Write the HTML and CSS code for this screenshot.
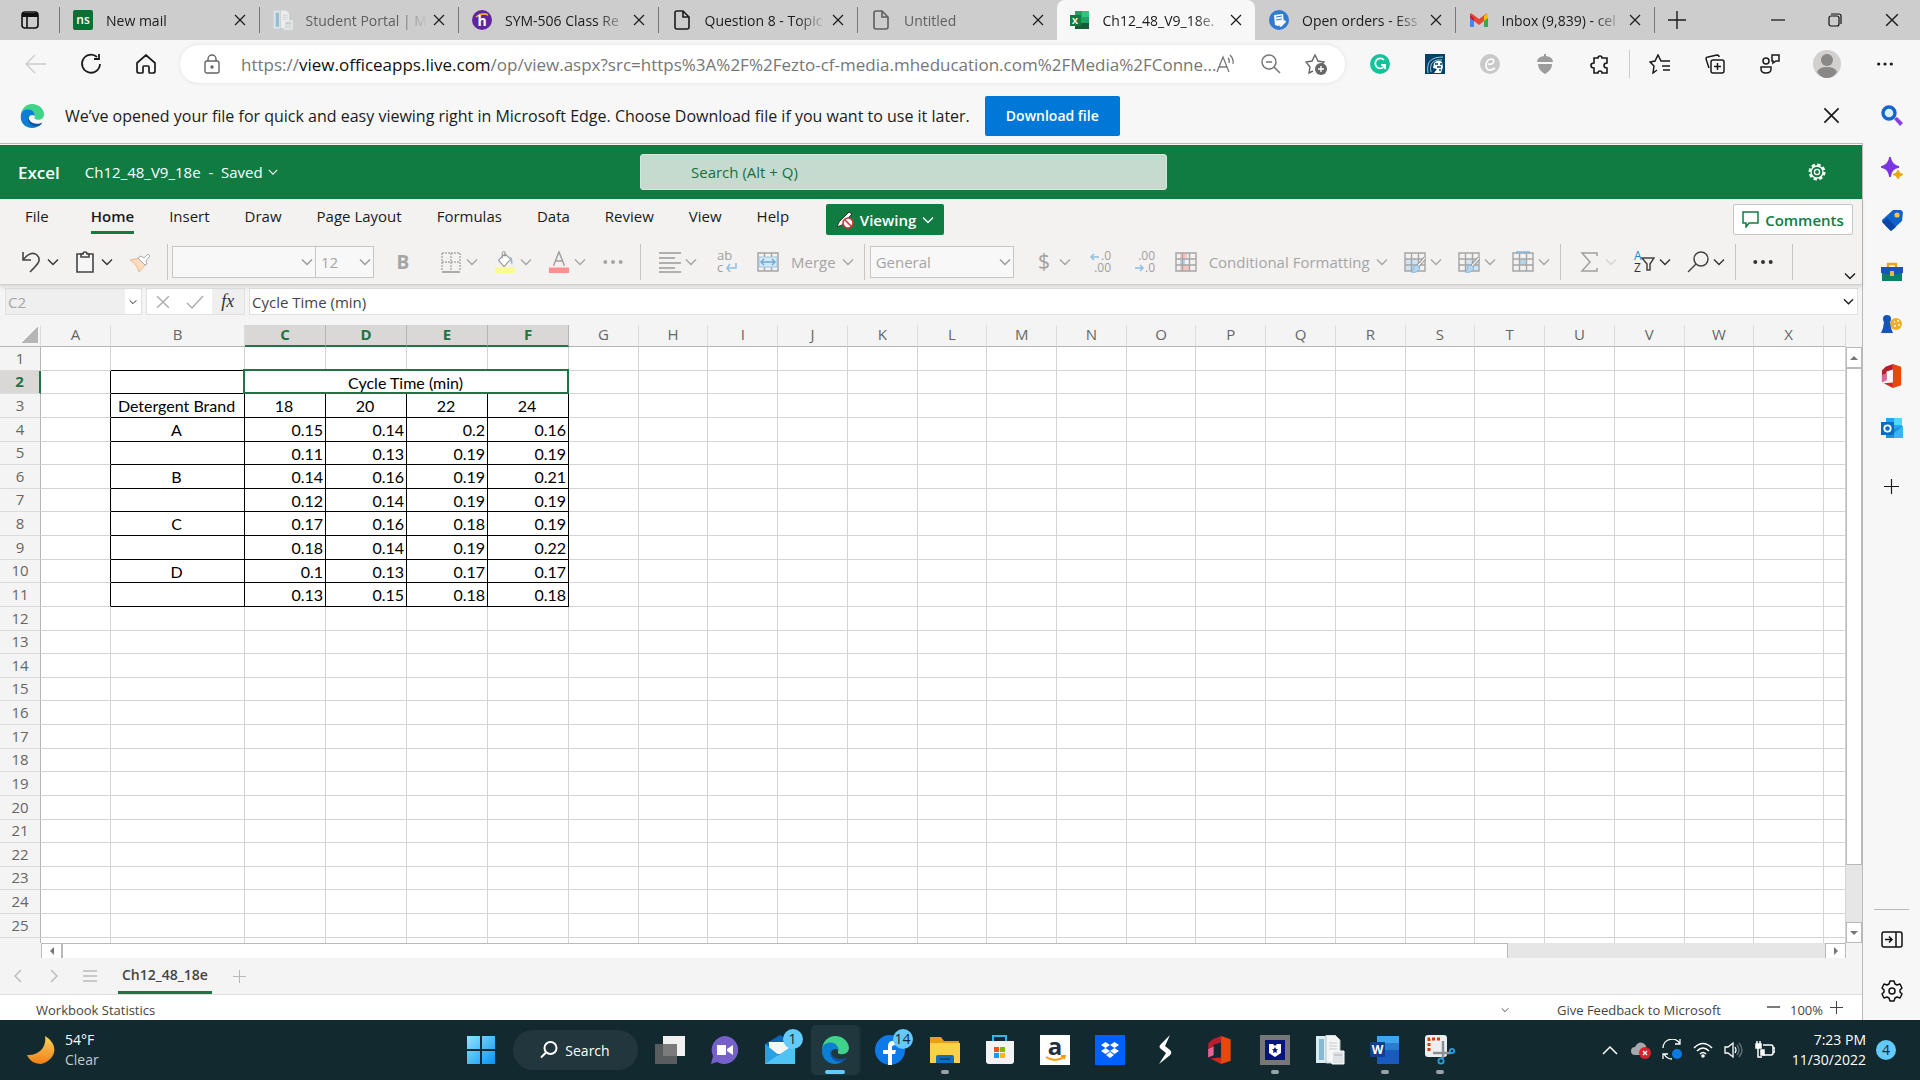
FILE: index.html
```html
<!DOCTYPE html>
<html lang="en">
<head>
    <meta charset="utf-8">
    <title>Ch12_48_V9_18e.xlsx</title>
    <link rel="stylesheet" href="styles.css">
</head>
<body>
    <!-- shared icons -->
    <svg class="icon-defs" aria-hidden="true">
        <symbol id="close" viewBox="0 0 12 12"><path d="M1 1l10 10M11 1L1 11" fill="none" stroke="currentColor" stroke-width="1.2"/></symbol>
        <symbol id="chevron" viewBox="0 0 12 12"><path d="M1 3.5l5 5 5-5" fill="none" stroke="currentColor" stroke-width="1.4"/></symbol>
        <symbol id="plus" viewBox="0 0 18 18"><path d="M9 0v18M0 9h18" fill="none" stroke="currentColor" stroke-width="1.4"/></symbol>
        <symbol id="dots" viewBox="0 0 20 20"><g fill="currentColor"><circle cx="3" cy="10" r="1.8"/><circle cx="10" cy="10" r="1.8"/><circle cx="17" cy="10" r="1.8"/></g></symbol>
        <symbol id="page" viewBox="0 0 20 20"><path d="M3 3q0-2 2-2h6l6 6v10q0 2-2 2H5q-2 0-2-2zM11 1v6h6" fill="none" stroke="currentColor" stroke-width="1.6"/></symbol>
        <symbol id="edge" viewBox="0 0 28 28">
            <path d="M2 14C2 6 8 1 14 1c8 0 13 6 13 11 0 4-3 6-6 6-4 0-5-1-4-3 1-4-3-6-6-6-5 0-9 3-9 5z" fill="#41d38a"/>
            <path d="M2 14c0-5 4-7 8-7 5 0 7 4 7 7-4-3-8 1-6 5 2 5 8 6 13 3-2 3-6 5-10 5C7 27 1 21 2 14z" fill="#0c7fd2"/>
            <path d="M10 14c-2 6 3 11 8 11 3 0 6-1 7-4-5 3-12 1-14-3-1-1-1-3-1-4z" fill="#1053a0"/>
        </symbol>
        <symbol id="office" viewBox="0 0 24 28">
            <path d="M13 1L5 4 1 8v12l5-2V9l7-2z" fill="#b5202c"/><path d="M1 13l5-2v8l-5 2z" fill="#e0669a"/>
            <path d="M13 1l9 3v20l-9 3z" fill="#e8480c"/><path d="M3 22l10-1v6z" fill="#d3281e"/>
        </symbol>
        <symbol id="paper" viewBox="0 0 28 30"><path d="M0 1h14v27H0z" fill="#dcecf3"/><path d="M3 4h5v21H3z" fill="#86b9d4"/><path d="M10 0h9l5 5v23H10z" fill="#f3f4f4" stroke="#b9c2c6"/><path d="M13 8h8M13 11h8M13 14h8" stroke="#c4ccd0"/><path d="M16 16h12v13H16z" fill="#dfe3e5" stroke="#fff"/><path d="M18 20h8" stroke="#aab3b8"/></symbol>
        <symbol id="grid" viewBox="0 0 22 22"><path d="M1 2h20v18H1zM1 8h20M1 14h20M7.5 2v18M14.5 2v18" fill="none" stroke="#a5a5a5" stroke-width="1.4"/></symbol>
        <symbol id="brush" viewBox="0 0 22 22"><path d="M21 7l-8 9" stroke="#999" stroke-width="3.4" fill="none"/><path d="M21 7l-8 9" stroke="#f3f2f1" stroke-width="1.4" fill="none"/><path d="M13 14l3 3c-2 4-5 5-9 4 2-1 2-2 2-3 0-3 2-4 4-4z" fill="#b4d6ec" stroke="#83b7dc"/></symbol>
    </svg>

    <header class="tab-strip">
        <button class="strip-menu" aria-label="Tab actions"><svg width="20" height="20" viewBox="0 0 20 20"><rect x="2" y="2" width="16" height="16" rx="3" fill="none" stroke="#111" stroke-width="1.6"/><path d="M2 3h16v4H2z" fill="#111"/><path d="M7 6v12" stroke="#111" stroke-width="1.6"/></svg></button>
        <div class="tabs">
            <div class="tab">
                <svg class="favicon" viewBox="0 0 20 20"><rect width="20" height="20" rx="2" fill="#0b7034"/><text x="10" y="14" text-anchor="middle" font-size="12" font-weight="600" fill="#fff">ns</text></svg>
                <a href="#">New mail</a><button aria-label="Close tab"><svg><use href="#close"/></svg></button>
            </div>
            <div class="tab asleep">
                <svg class="favicon"><use href="#paper"/></svg>
                <a href="#">Student Portal | M</a><button aria-label="Close tab"><svg><use href="#close"/></svg></button>
            </div>
            <div class="tab">
                <svg class="favicon" viewBox="0 0 20 20"><circle cx="10" cy="10" r="10" fill="#5f259f"/><path d="M4 7q6-5 12-2" stroke="#f2b233" stroke-width="1.5" fill="none"/><text x="10" y="16" text-anchor="middle" font-size="14" font-weight="700" fill="#fff">h</text></svg>
                <a href="#">SYM-506 Class Re</a><button aria-label="Close tab"><svg><use href="#close"/></svg></button>
            </div>
            <div class="tab">
                <svg class="favicon"><use href="#page"/></svg>
                <a href="#">Question 8 - Topic</a><button aria-label="Close tab"><svg><use href="#close"/></svg></button>
            </div>
            <div class="tab asleep">
                <svg class="favicon"><use href="#page"/></svg>
                <a href="#">Untitled</a><button aria-label="Close tab"><svg><use href="#close"/></svg></button>
            </div>
            <div class="tab current">
                <svg class="favicon" viewBox="0 0 20 20"><path d="M5 1h14v18H5z" fill="#21a366"/><path d="M12 1h7v6h-7z" fill="#33c481"/><path d="M5 13h14v6H5z" fill="#185c37"/><path d="M0 5h11v11H0z" fill="#107c41"/><text x="5" y="14" text-anchor="middle" font-size="9" font-weight="700" fill="#fff">X</text></svg>
                <a href="#">Ch12_48_V9_18e.</a><button aria-label="Close tab"><svg><use href="#close"/></svg></button>
            </div>
            <div class="tab">
                <svg class="favicon" viewBox="0 0 20 20"><circle cx="10" cy="10" r="10" fill="#2f7bd3"/><path d="M5 5l9-1 1 9-6 3-3-1z" fill="#fff"/><path d="M7 7l6-1M7 10l6-1" stroke="#2f7bd3"/><path d="M10 16l6-6 1 2-5 5z" fill="#fff"/></svg>
                <a href="#">Open orders - Ess</a><button aria-label="Close tab"><svg><use href="#close"/></svg></button>
            </div>
            <div class="tab">
                <svg class="favicon" viewBox="0 0 20 20"><path d="M1 5v12h4V8z" fill="#4285f4"/><path d="M15 8v9h4V5z" fill="#34a853"/><path d="M1 4l4 3v4L1 8z" fill="#c5221f"/><path d="M2 3l8 6 8-6-3 6v2l-5 4-5-4V8L1 5z" fill="#ea4335"/><path d="M15 6q4-4 4-1v3l-4 3z" fill="#fbbc04"/></svg>
                <a href="#">Inbox (9,839) - cel</a><button aria-label="Close tab"><svg><use href="#close"/></svg></button>
            </div>
        </div>
        <div class="window-buttons">
            <button aria-label="New tab"><svg width="18" height="18"><use href="#plus"/></svg></button>
            <span class="spacer"></span>
            <button aria-label="Minimize"><svg width="14" height="14"><path d="M0 7h14" stroke="#111" stroke-width="1.2"/></svg></button>
            <button aria-label="Restore"><svg width="14" height="14" viewBox="0 0 14 14" fill="none" stroke="#111" stroke-width="1.2"><rect x="1" y="3" width="10" height="10" rx="2"/><path d="M3 1h8q2 0 2 2v8"/></svg></button>
            <button aria-label="Close"><svg width="14" height="14"><use href="#close"/></svg></button>
        </div>
    </header>

    <div class="nav-bar">
        <button class="nav-button dim" aria-label="Back"><svg width="22" height="20" viewBox="0 0 22 20" fill="none" stroke="currentColor" stroke-width="1.4"><path d="M10 1L1 10l9 9M1 10h20"/></svg></button>
        <button class="nav-button" aria-label="Refresh"><svg width="22" height="22" viewBox="0 0 22 22" fill="none" stroke="currentColor" stroke-width="1.8"><path d="M20 11a9 9 0 1 1-3-7M19 1v5h-5"/></svg></button>
        <button class="nav-button" aria-label="Home"><svg width="20" height="20" viewBox="0 0 20 20" fill="none" stroke="currentColor" stroke-width="1.7"><path d="M1 9l9-8 9 8v8q0 2-2 2h-3q-1 0-1-1v-5q0-1-1-1H8q-1 0-1 1v5q0 1-1 1H3q-2 0-2-2z"/></svg></button>
        <div class="address">
            <svg width="16" height="20" viewBox="0 0 16 20" fill="none" stroke="#666" stroke-width="1.4"><rect x="1" y="7" width="14" height="12" rx="2"/><path d="M4 7V5a4 4 0 0 1 8 0v2"/><circle cx="8" cy="13" r="1" fill="#666"/></svg>
            <span class="url">https://<b>view.officeapps.live.com</b>/op/view.aspx?src=https%3A%2F%2Fezto-cf-media.mheducation.com%2FMedia%2FConne...</span>
            <button aria-label="Read aloud"><svg width="20" height="20" viewBox="0 0 20 20" fill="none" stroke="#777" stroke-width="1.3"><path d="M1 18L7 3l6 15M3 13h8M12 4q2 2 1 5M14 1q4 4 3 9"/></svg></button>
            <button aria-label="Zoom out"><svg width="20" height="20" viewBox="0 0 20 20" fill="none" stroke="#777" stroke-width="1.5"><circle cx="8" cy="8" r="7"/><path d="M13 13l6 6M5 8h6"/></svg></button>
            <button aria-label="Add to favorites"><svg width="22" height="22" viewBox="0 0 22 22" fill="none" stroke="#666" stroke-width="1.4"><path d="M8 18l-4 2 1-6-4-5 6-1 3-6 3 6 6 1-3 3"/><circle cx="16" cy="16" r="6" fill="#666" stroke="none"/><path d="M16 13v6M13 16h6" stroke="#fff"/></svg></button>
        </div>
        <button class="nav-button" aria-label="Grammarly"><svg width="20" height="20" viewBox="0 0 20 20"><circle cx="10" cy="10" r="10" fill="#15c39a"/><path d="M14 6a5 5 0 1 0 1 5h-4M15 11v4" fill="none" stroke="#fff" stroke-width="1.8"/></svg></button>
        <button class="nav-button" aria-label="Alaska extension"><svg width="20" height="20" viewBox="0 0 20 20"><path d="M0 0h20v20H0z" fill="#01426a"/><path d="M3 19C1 7 7 3 18 3M6 18C4 9 9 5 17 6" fill="none" stroke="#9bc9d8"/><path d="M9 9q4-4 8-1l1 5-2 6h-7l3-4-4-1z" fill="#fff"/><path d="M10 10h3M15 10h2M12 13h4M14 16h2" stroke="#01426a" stroke-width="1.4"/></svg></button>
        <button class="nav-button" aria-label="Capital One Shopping"><svg width="20" height="20" viewBox="0 0 20 20"><circle cx="10" cy="10" r="10" fill="#c9c9c9"/><path d="M15 14q-8 5-9-2 0-7 6-7 3 1 1 4-2 2-5 1" fill="none" stroke="#fff" stroke-width="1.6"/></svg></button>
        <button class="nav-button" aria-label="Acorns"><svg width="18" height="20" viewBox="0 0 18 20" fill="#9c9c9c"><path d="M1 8q0-5 7-6V0h2v2q7 1 7 6zM2 10h14q0 6-7 10-7-4-7-10z"/></svg></button>
        <button class="nav-button" aria-label="Extensions"><svg width="20" height="20" viewBox="0 0 20 20" fill="none" stroke="currentColor" stroke-width="1.6"><path d="M4 3h4q0-2 2-2t2 2h5v5q-3 0-3 2.500t3 2.500v5h-5q0-2-2-2t-2 2H4v-5q-3 0-3-2.500T4 8z" transform="translate(0 1)"/></svg></button>
        <span class="nav-divider"></span>
        <button class="nav-button" aria-label="Favorites"><svg width="22" height="20" viewBox="0 0 22 20" fill="none" stroke="currentColor" stroke-width="1.5"><path d="M8 16l-4 3 1-7-4-4 5-1 3-6 3 6h9M13 12h8M14 16h7"/></svg></button>
        <button class="nav-button" aria-label="Collections"><svg width="20" height="20" viewBox="0 0 20 20" fill="none" stroke="currentColor" stroke-width="1.5"><rect x="6" y="6" width="13" height="13" rx="2"/><path d="M12.500 9v7M9 12.500h7M4 14L1 5q0-2 2-2l9-2q2 0 2 2"/></svg></button>
        <button class="nav-button" aria-label="Share"><svg width="20" height="20" viewBox="0 0 20 20" fill="none" stroke="currentColor" stroke-width="1.5"><circle cx="6" cy="7" r="3"/><path d="M1 13h10v2q0 4-5 4t-5-4zM12 1h7v6h-3l-3 2V7h-1z"/></svg></button>
        <button class="nav-button profile" aria-label="Profile"><svg width="28" height="28" viewBox="0 0 28 28"><circle cx="14" cy="14" r="14" fill="#d2d0ce"/><circle cx="14" cy="10" r="6" fill="#8a8886"/><path d="M4 22q2-5 10-5t10 5q-4 6-10 6T4 22z" fill="#8a8886"/></svg></button>
        <button class="nav-button" aria-label="Settings and more"><svg width="18" height="18"><use href="#dots"/></svg></button>
    </div>

    <div class="content">
        <main>
            <div class="notice">
                <svg width="26" height="26"><use href="#edge"/></svg>
                <span>We’ve opened your file for quick and easy viewing right in Microsoft Edge. Choose Download file if you want to use it later.</span>
                <button class="download">Download file</button>
                <button class="dismiss" aria-label="Close"><svg width="17" height="17"><use href="#close"/></svg></button>
            </div>

            <div class="app">
                <div class="title-bar">
                    <div class="file-title"><strong>Excel</strong><span>Ch12_48_V9_18e&nbsp; - &nbsp;Saved</span><svg width="10" height="10"><use href="#chevron"/></svg></div>
                    <input type="search" placeholder="Search (Alt + Q)" aria-label="Search">
                    <button aria-label="Settings"><svg width="20" height="20" viewBox="0 0 20 20" fill="none" stroke="#fff"><circle cx="10" cy="10" r="7.300" stroke-width="2.400" stroke-dasharray="3.400 2.330"/><circle cx="10" cy="10" r="6" stroke-width="1.300"/><circle cx="10" cy="10" r="2.600" stroke-width="1.300"/></svg></button>
                </div>

                <div class="ribbon">
                    <nav class="ribbon-tabs">
                        <a href="#" class="file">File</a>
                        <a href="#" class="selected">Home</a>
                        <a href="#">Insert</a>
                        <a href="#">Draw</a>
                        <a href="#">Page Layout</a>
                        <a href="#">Formulas</a>
                        <a href="#">Data</a>
                        <a href="#">Review</a>
                        <a href="#">View</a>
                        <a href="#">Help</a>
                        <button class="viewing"><svg width="18" height="18" viewBox="0 0 18 18"><path d="M1 16l2-5L13 1l3 2L6 14z" fill="#fff" stroke="#333"/><circle cx="12" cy="12" r="5" fill="#fff" stroke="#d13438" stroke-width="1.6"/><path d="M8.500 8.500l7 7" stroke="#d13438" stroke-width="1.6"/></svg>Viewing<svg width="12" height="12"><use href="#chevron"/></svg></button>
                        <button class="comments"><svg width="17" height="17" viewBox="0 0 17 17" fill="none" stroke="#107c41" stroke-width="1.5"><path d="M1 1h15v11H7l-3 4v-4H1z"/></svg>Comments</button>
                    </nav>
                    <div class="tools">
                        <div class="group first">
                            <button class="tool on" aria-label="Undo"><svg viewBox="0 0 22 22"><path d="M2 1v8h8M2 9Q10-1 16 4c5 5 1 9-7 17" fill="none" stroke="#444" stroke-width="1.6"/></svg><svg class="arrow"><use href="#chevron"/></svg></button>
                            <button class="tool on" aria-label="Paste"><svg viewBox="0 0 22 22" fill="#f6f6f6" stroke="#444" stroke-width="1.6"><path d="M2 3h16v18H2z"/><path d="M6 6V3h2q0-2 2-2t2 2h2v3z"/></svg><svg class="arrow"><use href="#chevron"/></svg></button>
                            <button class="tool" aria-label="Format painter"><svg viewBox="0 0 22 22"><path d="M1 9l10-2 7 5-8 9q-2-8-9-12z" fill="#fbdcc0" stroke="#ecb98f"/><path d="M9 7l3-2 3 2 4-4 2 2-4 5 1 3-2 1z" fill="#fff" stroke="#a9a9a9"/></svg></button>
                        </div>
                        <div class="group fonts">
                            <div class="picker font-name"><select aria-label="Font"><option></option></select><svg class="arrow"><use href="#chevron"/></svg></div>
                            <div class="picker font-size"><select aria-label="Font size"><option>12</option></select><svg class="arrow"><use href="#chevron"/></svg></div>
                            <button class="tool bold" aria-label="Bold">B</button>
                            <button class="tool" aria-label="Borders"><svg viewBox="0 0 22 22" fill="none" stroke="#aaa" stroke-width="1.4"><path d="M2 2h18v18M2 2v18M11 2v18M2 11h18" stroke-dasharray="2 1"/><path d="M2 21h18" stroke-width="2"/></svg><svg class="arrow"><use href="#chevron"/></svg></button>
                            <button class="tool" aria-label="Fill color"><svg viewBox="0 0 22 24"><path d="M4 10l7-7 6 6-7 8zM8 8V3q0-3 3-2v5" fill="#fff" stroke="#999" stroke-width="1.2"/><path d="M16 6q4 1 3 9-2-1-2-7z" fill="#86b7dc"/><path d="M0 18h22v6H0z" fill="#fafa90"/></svg><svg class="arrow"><use href="#chevron"/></svg></button>
                            <button class="tool" aria-label="Font color"><svg viewBox="0 0 22 24"><path d="M5 16L11 1l6 15M7 11h8" fill="none" stroke="#a0a0a0" stroke-width="1.6"/><path d="M0 18h22v6H0z" fill="#fb9090"/></svg><svg class="arrow"><use href="#chevron"/></svg></button>
                            <button class="tool" aria-label="More font options"><svg><use href="#dots"/></svg></button>
                        </div>
                        <div class="group">
                            <button class="tool" aria-label="Align"><svg viewBox="0 0 22 22" fill="none" stroke="#999" stroke-width="1.5"><path d="M0 2h22M0 7h16M0 12h22M0 17h16M0 21h22"/></svg><svg class="arrow"><use href="#chevron"/></svg></button>
                            <button class="tool wide" aria-label="Wrap text"><svg viewBox="0 0 22 22"><text x="1" y="9" font-size="13" fill="#a0a0a0">ab</text><text x="1" y="21" font-size="13" fill="#a0a0a0">c</text><path d="M20 12v5h-9M14 13l-3 4 3 4" fill="none" stroke="#8fbfe3" stroke-width="1.5"/></svg></button>
                            <button class="tool"><svg viewBox="0 0 22 22"><path d="M1 2h20v18H1zM7.500 2v18M14.500 2v18" fill="none" stroke="#a5a5a5" stroke-width="1.5"/><path d="M2 6h18v10H2z" fill="#d3e7f4" stroke="#9cc5e2"/><path d="M4 11h14M7 8l-3 3 3 3M15 8l3 3-3 3" fill="none" stroke="#6ea8d4" stroke-width="1.4"/></svg><span>Merge</span><svg class="arrow"><use href="#chevron"/></svg></button>
                        </div>
                        <div class="group formats">
                            <div class="picker number-format"><select aria-label="Number format"><option>General</option></select><svg class="arrow"><use href="#chevron"/></svg></div>
                            <button class="tool" aria-label="Currency"><svg viewBox="0 0 22 22"><text x="11" y="18" text-anchor="middle" font-size="21" fill="#a0a0a0">$</text></svg><svg class="arrow"><use href="#chevron"/></svg></button>
                            <button class="tool wide" aria-label="Increase decimal"><svg viewBox="0 0 22 22"><text x="21" y="9" text-anchor="end" font-size="12" fill="#a0a0a0">.0</text><text x="21" y="21" text-anchor="end" font-size="12" fill="#a0a0a0">.00</text><path d="M9 6H1M4 3L1 6l3 3" fill="none" stroke="#8fbfe3" stroke-width="1.5"/></svg></button>
                            <button class="tool wide" aria-label="Decrease decimal"><svg viewBox="0 0 22 22"><text x="21" y="9" text-anchor="end" font-size="12" fill="#a0a0a0">.00</text><text x="21" y="21" text-anchor="end" font-size="12" fill="#a0a0a0">.0</text><path d="M1 17h8M6 14l3 3-3 3" fill="none" stroke="#8fbfe3" stroke-width="1.5"/></svg></button>
                            <button class="tool"><svg viewBox="0 0 22 22"><path d="M5 2h7v6H5zM5 14h9v6H5z" fill="#f8c4c4"/><path d="M5 8h5v6H5z" fill="#b4d6ec"/><use href="#grid"/></svg><span>Conditional Formatting</span><svg class="arrow"><use href="#chevron"/></svg></button>
                            <button class="tool" aria-label="Format as table"><svg viewBox="0 0 22 22"><path d="M1 8h14v12H1z" fill="#cfe4f2"/><use href="#grid"/><use href="#brush"/></svg><svg class="arrow"><use href="#chevron"/></svg></button>
                            <button class="tool" aria-label="Cell styles"><svg viewBox="0 0 22 22"><path d="M8 8h13v12H8z" fill="#cfe4f2"/><use href="#grid"/><use href="#brush"/></svg><svg class="arrow"><use href="#chevron"/></svg></button>
                            <button class="tool" aria-label="Insert cells"><svg viewBox="0 0 22 22"><path d="M8 8h6v6H8z" fill="#b4d6ec"/><use href="#grid"/><path d="M5 0v3M17 0v3M5 1h12" stroke="#83b7dc" stroke-width="1.3"/></svg><svg class="arrow"><use href="#chevron"/></svg></button>
                        </div>
                        <div class="group">
                            <button class="tool faint" aria-label="AutoSum"><svg viewBox="0 0 22 22"><path d="M18 5V2H3l8 9-8 9h15v-3" fill="none" stroke="#a0a0a0" stroke-width="1.5"/></svg><svg class="arrow"><use href="#chevron"/></svg></button>
                            <button class="tool on" aria-label="Sort and filter"><svg viewBox="0 0 22 22"><text x="1" y="9" font-size="12" fill="#1f86cf">A</text><text x="1" y="21" font-size="12" fill="#333">Z</text><path d="M9 7h12l-4 6v6h-3v-6z" fill="none" stroke="#444" stroke-width="1.5"/></svg><svg class="arrow"><use href="#chevron"/></svg></button>
                            <button class="tool on" aria-label="Find"><svg viewBox="0 0 22 22" fill="none" stroke="#444" stroke-width="1.5"><circle cx="14" cy="8" r="7"/><path d="M9 13l-8 8"/></svg><svg class="arrow"><use href="#chevron"/></svg></button>
                        </div>
                        <div class="group last"><button class="tool on" aria-label="More commands"><svg><use href="#dots"/></svg></button></div>
                        <button class="collapse" aria-label="Collapse ribbon"><svg width="12" height="12"><use href="#chevron"/></svg></button>
                    </div>
                </div>

                <div class="formula-bar">
                    <div class="name-box"><input type="text" value="C2" aria-label="Name box"><button aria-label="Names"><svg width="8" height="8"><use href="#chevron"/></svg></button></div>
                    <div class="formula-buttons">
                        <button aria-label="Cancel"><svg width="14" height="14"><use href="#close"/></svg></button>
                        <button aria-label="Enter"><svg width="18" height="14" viewBox="0 0 18 14"><path d="M1 8l5 5L17 1" fill="none" stroke="currentColor" stroke-width="1.4"/></svg></button>
                        <button class="fx" aria-label="Insert function">fx</button>
                    </div>
                    <div class="formula"><input type="text" value="Cycle Time (min)" aria-label="Formula"><button aria-label="Expand formula bar"><svg width="11" height="11"><use href="#chevron"/></svg></button></div>
                </div>

                <div class="sheet-area">
                    <div class="sheet-view">
                        <table class="sheet">
                            <colgroup id="columns"></colgroup>
                            <thead id="columnNames"></thead>
                            <tbody id="rows"></tbody>
                        </table>
                    </div>
                    <div class="v-scroll"><button aria-label="Scroll up"><i class="up"></i></button><div class="thumb"></div><button aria-label="Scroll down"><i class="down"></i></button></div>
                </div>
                <div class="h-scroll"><button aria-label="Scroll left"><i class="left"></i></button><div class="thumb"></div><div class="track"></div><button aria-label="Scroll right"><i class="right"></i></button></div>

                <div class="sheet-tabs">
                    <button aria-label="Previous sheet"><svg width="8" height="14" viewBox="0 0 8 14"><path d="M7 1L1 7l6 6" fill="none" stroke="currentColor" stroke-width="1.4"/></svg></button>
                    <button aria-label="Next sheet"><svg width="8" height="14" viewBox="0 0 8 14"><path d="M1 1l6 6-6 6" fill="none" stroke="currentColor" stroke-width="1.4"/></svg></button>
                    <button aria-label="All sheets"><svg width="14" height="12" viewBox="0 0 14 12"><path d="M0 1h14M0 6h14M0 11h14" stroke="currentColor" stroke-width="1.4"/></svg></button>
                    <a href="#">Ch12_48_18e</a>
                    <button aria-label="New sheet"><svg width="13" height="13"><use href="#plus"/></svg></button>
                </div>

                <footer class="status-bar">
                    <span>Workbook Statistics</span>
                    <svg class="status-arrow" width="8" height="8"><use href="#chevron"/></svg>
                    <a href="#">Give Feedback to Microsoft</a>
                    <button aria-label="Zoom out"><svg width="13" height="13"><path d="M0 6h13" stroke="#444" stroke-width="1.4"/></svg></button>
                    <span>100%</span>
                    <button aria-label="Zoom in"><svg width="13" height="13"><use href="#plus"/></svg></button>
                </footer>
            </div>
        </main>

        <aside class="sidebar">
            <button aria-label="Search"><svg viewBox="0 0 22 22"><path d="M13 14l3-2 6 6-3 3z" fill="#8a3ee0"/><circle cx="8" cy="8" r="6" fill="#d9f1fb" stroke="#1565d0" stroke-width="3.400"/></svg></button>
            <button aria-label="Discover"><svg viewBox="0 0 22 22"><path d="M9 0q1 8 9 10-8 1-9 10-1-9-9-10 8-2 9-10z" fill="#7a35e0" stroke="#7a35e0" stroke-width="1.5"/><path d="M17 13q1 4 5 4.500-4 1-5 4.500-1-4-5-4.500 4-.5 5-4.500z" fill="#eaa513" stroke="#eaa513"/></svg></button>
            <button aria-label="Shopping"><svg viewBox="0 0 22 22"><path d="M1 11L12 1l8 0 2 2-1 9-11 10Q6 19 1 12z" fill="#0f62c9"/><path d="M1 13l5-4 9 9-5 4z" fill="#0b45a8"/><circle cx="16" cy="6" r="2.600" fill="#f5c33b"/></svg></button>
            <button aria-label="Tools"><svg viewBox="0 0 22 22"><path d="M7 6V3h8v3" fill="none" stroke="#e9a51c" stroke-width="2.400"/><path d="M1 12h20v8H1z" fill="#0a8064"/><path d="M0 6h22v6l-11 2L0 12z" fill="#1257c0"/><path d="M9 10h4v5H9z" fill="#f2b92c"/></svg></button>
            <button aria-label="Games"><svg viewBox="0 0 22 22"><circle cx="15" cy="11" r="6" fill="#f0ae24"/><path d="M13 9h1M16 8h2M13 13h2M17 12h2" stroke="#fff" stroke-width="1.6"/><circle cx="6" cy="6" r="4" fill="#1554b8"/><path d="M3 9h6l1 6 2 5H0l2-5z" fill="#1554b8"/></svg></button>
            <button aria-label="Office"><svg class="tall"><use href="#office"/></svg></button>
            <button aria-label="Outlook"><svg viewBox="0 0 22 22"><path d="M5 1h16v13H5z" fill="#28a8ea"/><path d="M13 1h8v7h-8z" fill="#50d9ff"/><path d="M5 14l17-5v12H5z" fill="#1a90e0"/><path d="M13 16l9-7v12h-9z" fill="#35b8f1"/><path d="M0 5h13v13H0z" fill="#0a6cc0"/><circle cx="6.500" cy="11.500" r="3.200" fill="none" stroke="#fff" stroke-width="1.8"/></svg></button>
            <button class="add" aria-label="Add app"><svg class="small"><use href="#plus"/></svg></button>
            <hr>
            <button aria-label="Hide sidebar"><svg viewBox="0 0 22 22" fill="none" stroke="#111" stroke-width="1.5"><rect x="1" y="4" width="20" height="15" rx="2"/><path d="M15 4v15M4 11.500h7M8 8.500l3 3-3 3"/></svg></button>
            <button aria-label="Sidebar settings"><svg viewBox="0 0 22 22" fill="none" stroke="#111" stroke-width="1.5"><path d="M9 1h4l1 3 2 1 3-1 2 4-2 2v2l2 2-2 4-3-1-2 1-1 3H9l-1-3-2-1-3 1-2-4 2-2v-2L1 8l2-4 3 1 2-1z" stroke-linejoin="round"/><circle cx="11" cy="11" r="3"/></svg></button>
        </aside>
    </div>

    <div class="taskbar">
        <button class="weather"><svg width="28" height="30" viewBox="0 0 28 30"><defs><linearGradient id="moon" x2="0" y2="1"><stop stop-color="#fbd35a"/><stop offset="1" stop-color="#f07f16"/></linearGradient></defs><path d="M18 1c14 8 12 24-4 28C7 29 2 25 0 20c12 1 20-8 18-19z" fill="url(#moon)"/></svg><span>54°F<small>Clear</small></span></button>
        <div class="apps">
            <button aria-label="Start"><svg viewBox="0 0 30 30"><defs><linearGradient id="win" x2="1" y2="1"><stop stop-color="#8ce6ff"/><stop offset="1" stop-color="#0a93f5"/></linearGradient></defs><path d="M1 1h13v13H1zM16 1h13v13H16zM1 16h13v13H1zM16 16h13v13H16z" fill="url(#win)"/></svg></button>
            <button class="search-pill"><svg viewBox="0 0 18 18" fill="none" stroke="#fff" stroke-width="2"><circle cx="10.500" cy="7" r="6"/><path d="M6 11.500l-5 5"/></svg>Search</button>
            <button aria-label="Task view"><svg viewBox="0 0 30 30"><path d="M8 1h22v20H8z" fill="#f1f1f1"/><path d="M0 9h22v20H0z" fill="#666" opacity=".85"/></svg></button>
            <button aria-label="Chat"><svg viewBox="0 0 30 30"><path d="M15 1a14 14 0 1 1-8 26l-6 2 2-8A14 14 0 0 1 15 1z" fill="#7561c8"/><path d="M7 10h9v10H7zM17 14l6-4v10l-6-4z" fill="#fff"/></svg></button>
            <button aria-label="Mail"><svg viewBox="0 0 30 30"><path d="M0 9L15 0l15 9v20H0z" fill="#0e66b8"/><path d="M4 7h22v12H4z" fill="#f5f5f5"/><path d="M0 9l15 12L30 9v20H0z" fill="#28a0e4"/><path d="M0 29L30 9v20z" fill="#4fc4f4"/></svg><em>1</em></button>
            <button class="open" aria-label="Edge"><svg><use href="#edge"/></svg></button>
            <button aria-label="Facebook"><svg viewBox="0 0 30 30"><circle cx="15" cy="15" r="15" fill="#0e79e8"/><path d="M13 30V19H8v-4h5v-4q0-6 8-5v4q-4 0-4 2v3h4l-1 4h-3v11z" fill="#fff"/></svg><em>14</em></button>
            <button class="running" aria-label="File Explorer"><svg viewBox="0 0 30 30"><path d="M0 2h11l3 4h15v6H0z" fill="#e6a117"/><path d="M0 8h30v20H0z" fill="#fcd04b"/><path d="M6 28v-6q0-2 2-2h14q2 0 2 2v6z" fill="#0c70c0"/><path d="M10 24h10" stroke="#074a86" stroke-width="2"/></svg></button>
            <button aria-label="Store"><svg viewBox="0 0 30 30"><path d="M8 7V1h13v6" fill="none" stroke="#36b4e8" stroke-width="2"/><path d="M1 6h28v20q0 3-3 3H4q-3 0-3-3z" fill="#f3f3f3"/><path d="M9 12h5v5H9z" fill="#f25022"/><path d="M15 12h5v5h-5z" fill="#7fba00"/><path d="M9 18h5v5H9z" fill="#00a4ef"/><path d="M15 18h5v5h-5z" fill="#ffb900"/></svg></button>
            <button aria-label="Amazon"><svg viewBox="0 0 30 30"><path d="M0 0h30v30H0z" fill="#fff"/><text x="15" y="20" text-anchor="middle" font-size="24" font-weight="700" fill="#232f3e">a</text><path d="M6 22q9 6 18 0M21 21h4l-1 3" fill="none" stroke="#f90" stroke-width="1.8"/></svg></button>
            <button aria-label="Dropbox"><svg viewBox="0 0 30 30"><path d="M0 0h30v30H0z" fill="#0061fe"/><path d="M10.500 7l4.500 3-4.500 3L6 10zM19.500 7l4.500 3-4.500 3-4.500-3zM10.500 13l4.500 3-4.500 3L6 16zM19.500 13l4.500 3-4.500 3-4.500-3zM15 17l4 3-4 3-4-3z" fill="#fff"/></svg></button>
            <button aria-label="Slader"><svg viewBox="0 0 30 30"><path d="M20 0l-9 9q-3 3 0 5l5 4-7 11 10-8q4-3 1-6l-5-4z" fill="#fff"/></svg></button>
            <button aria-label="Office"><svg><use href="#office"/></svg></button>
            <button class="running" aria-label="McGraw Hill"><svg viewBox="0 0 30 30"><path d="M0 0h30v30H0z" fill="#777"/><path d="M5 5h20v20H5z" fill="#06157c"/><path d="M9 9h4l2 2 2-2h4v9l-6 4-6-4z" fill="#fff"/><path d="M15 12l1 2h2l-1.500 1.500.5 2.500-2-1-2 1 .5-2.500L12 14h2z" fill="#06157c"/></svg></button>
            <button aria-label="Documents"><svg><use href="#paper"/></svg></button>
            <button class="running" aria-label="Word"><svg viewBox="0 0 30 30"><path d="M7 1h22v28H7z" fill="#185abd"/><path d="M7 1h22v7H7z" fill="#41a5ee"/><path d="M7 8h22v7H7z" fill="#2b7cd3"/><path d="M0 7h15v15H0z" fill="#103f91"/><text x="7.500" y="19" text-anchor="middle" font-size="12" font-weight="700" fill="#fff">W</text></svg></button>
            <button class="running" aria-label="Snipping Tool"><svg viewBox="0 0 30 30"><rect width="22" height="22" rx="3" fill="#eceef2"/><path d="M4 16V4h13" fill="none" stroke="#d83b01" stroke-width="3" stroke-dasharray="3 2"/><path d="M18 6v17M8 18h18" stroke="#8b8f94" stroke-width="2.400"/><circle cx="27" cy="16" r="2.200" fill="none" stroke="#1fa2e6" stroke-width="1.8"/><circle cx="16" cy="26" r="2.600" fill="none" stroke="#1fa2e6" stroke-width="1.8"/></svg></button>
        </div>
        <div class="tray">
            <button aria-label="Hidden icons"><svg width="16" height="10" viewBox="0 0 16 10"><path d="M1 9l7-7 7 7" fill="none" stroke="#fff" stroke-width="1.5"/></svg></button>
            <button aria-label="OneDrive"><svg width="20" height="18" viewBox="0 0 20 18"><path d="M4 14q-4 0-4-4t4-4q3-6 8-4 4 2 3 6 4 0 4 3t-3 3z" fill="#a5a9ab"/><circle cx="14" cy="12" r="6" fill="#d9202b"/><path d="M12 10l4 4M16 10l-4 4" stroke="#fff" stroke-width="1.4"/></svg></button>
            <button aria-label="Updates"><svg width="20" height="22" viewBox="0 0 20 22" fill="none" stroke="#fff" stroke-width="1.3"><path d="M1 9a9 9 0 0 1 17-4M18 0v5h-5M10 20q-5 0-8-5M1 20v-5h5"/><circle cx="15" cy="15" r="5" fill="#0a7ae0" stroke="none"/></svg></button>
            <button aria-label="Network"><svg width="20" height="16" viewBox="0 0 20 16" fill="none" stroke="#fff" stroke-width="1.6"><path d="M1 6q9-9 18 0M4 9q6-6 12 0M7 12q3-3 6 0"/><circle cx="10" cy="14" r="1" fill="#fff"/></svg></button>
            <button aria-label="Volume"><svg width="20" height="18" viewBox="0 0 20 18" fill="none" stroke="#fff" stroke-width="1.3"><path d="M1 6h3l5-4v14l-5-4H1zM11 6q2 3 0 6"/><path d="M13 4q4 5 0 10M15 2q6 7 0 14" stroke="#63757a"/></svg></button>
            <button aria-label="Battery"><svg width="20" height="18" viewBox="0 0 20 18" fill="none" stroke="#fff" stroke-width="1.5"><path d="M8 4h8q2 0 2 2v6q0 2-2 2H8M18 7h2v4h-2M3 7v9h4"/><path d="M1 3h5v4H1zM2 0v3M5 0v3M6 9h3v5H6z" fill="#fff"/></svg></button>
            <button class="clock">7:23 PM<br>11/30/2022</button>
            <span class="alerts">4</span>
        </div>
    </div>

    <script>
        const letters = 'ABCDEFGHIJKLMNOPQRSTUVWX'.split('');
        const boxed = {
            2: ['', 'Cycle Time (min)'],
            3: ['Detergent Brand', '18', '20', '22', '24'],
            4: ['A', '0.15', '0.14', '0.2', '0.16'],
            5: ['', '0.11', '0.13', '0.19', '0.19'],
            6: ['B', '0.14', '0.16', '0.19', '0.21'],
            7: ['', '0.12', '0.14', '0.19', '0.19'],
            8: ['C', '0.17', '0.16', '0.18', '0.19'],
            9: ['', '0.18', '0.14', '0.19', '0.22'],
            10: ['D', '0.1', '0.13', '0.17', '0.17'],
            11: ['', '0.13', '0.15', '0.18', '0.18']
        };

        // header row, one extra column for the part that is cut off
        let cols = '<col class="col-number">';
        let head = '<tr><th class="corner"></th>';
        letters.concat('').forEach(letter => {
            const picked = letter && 'CDEF'.includes(letter);
            cols += '<col class="col-' + (letter || 'rest') + '">';
            head += '<th scope="col"' + (picked ? ' class="picked"' : '') + '>' + letter + '</th>';
        });
        document.getElementById('columns').innerHTML = cols;
        document.getElementById('columnNames').innerHTML = head + '</tr>';

        // 25 full rows and the top of the next one
        let body = '';
        for (let row = 1; row <= 26; row++) {
            const values = boxed[row];
            body += '<tr><th scope="row"' + (row === 2 ? ' class="picked"' : '') + '>' + (row < 26 ? row : '') + '</th>';
            body += '<td' + (values ? ' class="before-box"' : '') + '></td>';
            if (values) {
                values.forEach((value, i) => {
                    const merged = row === 2 && i === 1;
                    const centered = i === 0 || row < 4;
                    body += '<td class="boxed' + (centered ? ' centered' : '') + (merged ? ' merged" colspan="4' : '') + '">' + value + '</td>';
                });
            } else {
                body += '<td' + (row === 1 ? ' class="above-box"' : '') + '></td>' + '<td></td>'.repeat(4);
            }
            body += '<td></td>'.repeat(19) + '</tr>';
        }
        document.getElementById('rows').innerHTML = body;
    </script>
</body>
</html>
```

FILE: styles.css
```css
* {
    box-sizing: border-box;
}

body {
    display: flex;
    flex-direction: column;
    height: 100vh;
    margin: 0;
    overflow: hidden;
    background-color: #f7f7f7;
    color: #1b1b1b;
    font-family: "Open Sans", "Noto Sans", sans-serif;
    font-size: 15px;
}

button, input, select {
    margin: 0;
    padding: 0;
    border: 0;
    background: none;
    color: inherit;
    font: inherit;
}

button {
    display: flex;
    flex: none;
    align-items: center;
    justify-content: center;
}

a {
    color: inherit;
    text-decoration: none;
}

svg {
    flex: none;
}

.icon-defs {
    position: absolute;
    width: 0;
    height: 0;
}

/* browser tabs */
.tab-strip {
    display: flex;
    height: 40px;
    background-color: #cdcdcd;
    font-size: 14px;
}

.strip-menu {
    width: 59px;
}

.tabs {
    display: flex;
    flex: 1;
    min-width: 0;
}

.tab {
    display: flex;
    flex: 1 1 0;
    align-items: center;
    min-width: 0;
    padding: 0 13px;
    border-left: 1px solid #777;
    border-image: linear-gradient(transparent 20%, #777 20%, #777 82%, transparent 82%) 1;
}

.tab a {
    flex: 1;
    min-width: 0;
    margin: 0 5px 0 13px;
    overflow: hidden;
    white-space: nowrap;
    mask-image: linear-gradient(to right, #000 75%, transparent);
}

.tab button svg {
    width: 12px;
    height: 12px;
}

.favicon {
    width: 20px;
    height: 20px;
}

.asleep a, .asleep .favicon {
    color: #444;
    opacity: .8;
}

.tab.current {
    border: 0;
    border-radius: 8px 8px 0 0;
    background-color: #f7f7f7;
}

.tab.current + .tab {
    border-image: none;
    border-color: transparent;
}

.window-buttons {
    display: flex;
    flex: none;
    width: 266px;
    border-left: 1px solid #888;
    border-image: linear-gradient(transparent 20%, #777 20%, #777 82%, transparent 82%) 1;
}

.window-buttons button {
    width: 57px;
}

.window-buttons button:first-child {
    width: 44px;
}

.spacer {
    flex: 1;
}

/* address bar */
.nav-bar {
    display: flex;
    align-items: center;
    height: 48px;
    padding: 0 8px;
}

.nav-button {
    width: 55px;
    height: 40px;
}

.nav-button.dim {
    color: #ccc;
}

.nav-button.profile {
    width: 60px;
}

.address {
    display: flex;
    flex: 1;
    align-items: center;
    min-width: 0;
    height: 38px;
    margin: 0 7px;
    padding: 0 7px 0 24px;
    border-radius: 19px;
    background-color: #fff;
    box-shadow: 0 0 4px rgba(0, 0, 0, .1);
}

.address button {
    width: 45px;
}

.url {
    flex: 1;
    min-width: 0;
    margin-left: 21px;
    color: #767676;
    font-size: 17px;
    white-space: nowrap;
}

.url b {
    color: #111;
    font-weight: 400;
}

.nav-divider {
    width: 1px;
    height: 28px;
    margin: 0 2px;
    background-color: #ccc;
}

/* page and sidebar */
.content {
    display: flex;
    flex: 1;
    min-height: 0;
}

main {
    display: flex;
    flex: 1;
    flex-direction: column;
    min-width: 0;
    border-right: 1px solid #b9b9b9;
}

.notice {
    display: flex;
    align-items: center;
    height: 56px;
    margin: 0 -1px 1px 0;
    padding: 0 19px;
    border-bottom: 1px solid #b9b9b9;
    background-color: #f7f7f7;
    font-size: 16px;
    white-space: nowrap;
}

.notice span {
    margin-left: 20px;
}

.notice .download {
    width: 135px;
    height: 40px;
    margin-left: 15px;
    border-radius: 2px;
    background-color: #0078d7;
    color: #fff;
    font-size: 14px;
    font-weight: 600;
}

.dismiss {
    margin-left: auto;
    padding: 4px;
}

.app {
    display: flex;
    flex: 1;
    flex-direction: column;
    min-height: 0;
    background-color: #f4f4f4;
}

.title-bar {
    display: grid;
    grid-template-columns: 640px 527px 1fr;
    align-items: center;
    height: 54px;
    background-color: #107c41;
    color: #fff;
}

.file-title {
    display: flex;
    align-items: center;
    gap: 5px;
    padding-left: 18px;
}

.file-title strong {
    margin-right: 20px;
    font-size: 17px;
    font-weight: 600;
}

.title-bar input {
    height: 36px;
    padding-left: 50px;
    border: 1px solid #d5e6dc;
    border-radius: 3px;
    background-color: #c6dbcf;
}

.title-bar input::placeholder {
    color: #1a6e40;
    opacity: 1;
}

.title-bar button {
    justify-self: end;
    margin-right: 35px;
}

/* ribbon */
.ribbon {
    position: relative;
    border-bottom: 1px solid #d2d0ce;
    background-color: #f3f2f1;
    box-shadow: 0 2px 4px rgba(0, 0, 0, .12);
}

.ribbon-tabs {
    display: flex;
    align-items: center;
    gap: 35px;
    height: 41px;
    padding: 0 9px 0 25px;
}

.ribbon-tabs a {
    align-self: flex-start;
    margin-top: 4px;
    padding-bottom: 2px;
    border-bottom: 3px solid transparent;
    line-height: 26px;
}

.ribbon-tabs .file {
    margin-right: 7px;
}

.ribbon-tabs .selected {
    border-bottom-color: #107c41;
    font-weight: 600;
}

.viewing, .comments {
    gap: 6px;
    height: 31px;
    border-radius: 2px;
    font-weight: 600;
}

.viewing {
    width: 118px;
    margin-left: 2px;
    background-color: #107c41;
    color: #fff;
}

.comments {
    width: 120px;
    margin-left: auto;
    border: 1px solid #c8c6c4;
    background-color: #fff;
    color: #107c41;
}

.tools {
    display: flex;
    align-items: center;
    height: 44px;
    padding-left: 13px;
}

.group {
    display: flex;
    align-items: center;
    height: 36px;
    padding: 0 2px 0 10px;
    border-right: 1px solid #c8c6c4;
}

.group.first {
    padding: 0 8px 0 0;
}

.group.fonts {
    padding: 0 8px 0 4px;
}

.group.formats {
    padding-left: 5px;
}

.group.last {
    padding: 0 10px 0 8px;
}

.tool {
    gap: 4px;
    height: 32px;
    padding: 0 8px;
    color: #a5a5a5;
}

.tool.wide {
    padding: 0 11px;
}

.tool svg {
    width: 22px;
    height: 22px;
}

.tool .arrow, .picker .arrow {
    width: 12px;
    height: 12px;
}

.tool span {
    padding: 0 2px 0 8px;
    white-space: nowrap;
}

.tool.on {
    color: #333;
}

.tool.faint .arrow {
    color: #d4d4d4;
}

.tool.bold {
    width: 58px;
    font-size: 19px;
    font-weight: 700;
}

.picker {
    position: relative;
    height: 32px;
}

.picker select {
    width: 100%;
    height: 100%;
    padding-left: 5px;
    border: 1px solid #c8c6c4;
    background-color: #f8f8f8;
    color: #a5a5a5;
    appearance: none;
}

.picker .arrow {
    position: absolute;
    top: 10px;
    right: 3px;
    color: #999;
    pointer-events: none;
}

.font-name {
    width: 144px;
}

.font-size {
    width: 59px;
    margin-left: -1px;
}

.number-format {
    width: 144px;
    margin-right: 11px;
}

.collapse {
    align-self: flex-end;
    margin: 0 6px 2px auto;
}

/* formula bar */
.formula-bar {
    display: flex;
    gap: 4px;
    height: 27px;
    margin: 3px 4px 10px 5px;
}

.name-box, .formula-buttons, .formula {
    display: flex;
    border: 1px solid #e1e1e1;
    background-color: #fff;
}

.name-box {
    width: 137px;
}

.name-box input {
    flex: 1;
    min-width: 0;
    padding: 2px;
    background-color: #efefef;
    color: #a5a5a5;
}

.name-box button {
    width: 16px;
}

.formula-buttons {
    width: 99px;
    color: #ababab;
}

.formula-buttons button {
    flex: 1;
}

.formula-buttons .fx {
    background-color: #efefef;
    color: #333;
    font-family: "Liberation Serif", serif;
    font-size: 18px;
    font-style: italic;
}

.formula {
    flex: 1;
}

.formula input {
    flex: 1;
    padding-left: 2px;
    color: #444;
}

.formula button {
    width: 17px;
}

/* sheet */
.sheet-area {
    display: flex;
    flex: 1;
    min-height: 0;
}

.sheet-view {
    flex: 1;
    min-width: 0;
    overflow: hidden;
}

.sheet {
    width: 100%;
    border-spacing: 0;
    table-layout: fixed;
}

.col-number {
    width: 41px;
}

.col-A {
    width: 70px;
}

.col-B {
    width: 134px;
}

.col-C, .col-D, .col-E, .col-F {
    width: 81px;
}

.col-rest {
    width: 22px;
}

.sheet th, .sheet td {
    height: 24px;
    padding: 0;
    border-right: 1px solid #d4d4d4;
    border-bottom: 1px solid #d4d4d4;
    line-height: 22px;
    white-space: nowrap;
}

.sheet th {
    border-color: #dcdcdc;
    background-color: #f4f4f4;
    color: #666;
    font-weight: 400;
    vertical-align: top;
}

.sheet thead th {
    height: 22px;
    border-bottom: 1px solid #b5b5b5;
    line-height: 18px;
}

.sheet tbody th {
    border-right-color: #b5b5b5;
}

.sheet td {
    padding-right: 2px;
    background-color: #fff;
    color: #000;
    font-family: Lato, sans-serif;
    font-size: 16px;
    text-align: right;
}

.sheet tbody tr:nth-child(8n+2) > *,
.sheet tbody tr:nth-child(8n+5) > *,
.sheet tbody tr:nth-child(8n+7) > * {
    height: 23px;
    line-height: 21px;
}

.sheet .corner {
    background: linear-gradient(135deg, transparent 50%, #b5b5b5 50%) 22px 2px / 16px 16px no-repeat #f4f4f4;
}

.sheet .picked {
    background-color: #d9d8d7;
    color: #217346;
    font-weight: 700;
}

.sheet thead .picked {
    border-right-color: #b5b5b5;
    border-bottom: 2px solid #217346;
}

.sheet tbody .picked {
    border-right: 2px solid #217346;
}

.sheet .boxed {
    border-color: #000;
}

.sheet .before-box {
    border-right-color: #000;
}

.sheet .above-box {
    border-bottom-color: #000;
}

.sheet .centered {
    padding: 0 2px 0 0;
    text-align: center;
}

.sheet .merged {
    position: relative;
}

.sheet .merged::after {
    content: "";
    position: absolute;
    inset: -2px -1px -1px -2px;
    border: 2px solid #217346;
}

.sheet tbody tr:last-child th {
    border-bottom: 0;
}

.v-scroll {
    display: flex;
    flex-direction: column;
    width: 16px;
    margin-top: 22px;
    background-color: #e6e6e6;
}

.v-scroll button {
    height: 21px;
    border: 1px solid #b9b9b9;
    background-color: #fff;
}

.v-scroll .thumb {
    flex: 1;
    margin-bottom: 57px;
    border: 1px solid #b9b9b9;
    background-color: #fff;
}

.h-scroll {
    display: flex;
    height: 15px;
    margin: 0 16px 0 41px;
    background-color: #e6e6e6;
}

.h-scroll button {
    width: 21px;
    border: 1px solid #b9b9b9;
    border-bottom: 0;
    background-color: #fff;
}

.h-scroll .thumb {
    flex: 82;
    border: 1px solid #b9b9b9;
    border-bottom: 0;
    background-color: #fff;
}

.h-scroll .track {
    flex: 18;
}

.up, .down, .left, .right {
    border: 4px solid transparent;
}

.up {
    border-top: 0;
    border-bottom-color: #777;
}

.down {
    border-bottom: 0;
    border-top-color: #777;
}

.left {
    border-left: 0;
    border-right-color: #777;
}

.right {
    border-right: 0;
    border-left-color: #777;
}

.sheet-tabs {
    display: flex;
    height: 37px;
    border-bottom: 1px solid #dcdcdc;
    color: #b9b9b9;
}

.sheet-tabs button {
    width: 36px;
}

.sheet-tabs button:last-child {
    width: 56px;
}

.sheet-tabs a {
    margin-left: 10px;
    padding: 0 4px;
    border-bottom: 3px solid #217346;
    color: #444;
    font-size: 14px;
    font-weight: 600;
    line-height: 34px;
}

.status-bar {
    display: flex;
    align-items: center;
    height: 25px;
    padding: 4px 19px 0 36px;
    background-color: #fff;
    color: #444;
    font-size: 13px;
}

.status-arrow {
    margin-left: auto;
}

.status-bar a {
    margin: 0 46px 0 48px;
}

.status-bar button {
    margin: 0 0 4px;
}

.status-bar button + span {
    margin: 0 7px 0 10px;
}

/* sidebar */
.sidebar {
    display: flex;
    flex-direction: column;
    width: 57px;
    padding: 2px 0 3px;
}

.sidebar button {
    height: 52px;
}

.sidebar .add {
    margin-top: 6px;
}

.sidebar svg {
    width: 22px;
    height: 22px;
}

.sidebar .tall {
    height: 26px;
}

.sidebar .small {
    width: 15px;
    height: 15px;
}

.sidebar hr {
    width: 35px;
    margin: auto auto 3px;
    border: 0;
    border-top: 1px solid #b9b9b9;
}

/* taskbar */
.taskbar {
    display: grid;
    grid-template-columns: 1fr auto 1fr;
    align-items: center;
    height: 60px;
    background-color: #12292f;
    color: #fff;
    font-size: 14px;
}

.weather {
    justify-self: start;
    gap: 10px;
    padding-left: 27px;
    line-height: 20px;
    text-align: left;
}

.weather small {
    display: block;
    color: #c3cbcd;
    font-size: 14px;
}

.apps {
    display: flex;
    gap: 7px;
}

.apps button {
    position: relative;
    width: 48px;
    height: 50px;
    border-radius: 5px;
}

.apps svg {
    width: 30px;
    height: 30px;
}

.apps .search-pill {
    gap: 7px;
    width: 125px;
    height: 40px;
    margin: 5px 1px;
    border-radius: 20px;
    background-color: #22373d;
    font-size: 14px;
}

.apps .search-pill svg {
    width: 18px;
    height: 18px;
}

.apps .open {
    background-color: #20373e;
    box-shadow: 2px 0 0 #1a3037;
}

.apps .open::after, .apps .running::after {
    content: "";
    position: absolute;
    bottom: 1px;
    width: 8px;
    height: 4px;
    border-radius: 2px;
    background-color: #98a3a7;
}

.apps .open::after {
    width: 20px;
    background-color: #62cbfc;
}

.apps em {
    position: absolute;
    top: 4px;
    right: 1px;
    min-width: 20px;
    height: 20px;
    border-radius: 10px;
    background-color: #62cbfc;
    color: #12292f;
    font-style: normal;
    line-height: 20px;
}

.tray {
    display: flex;
    align-items: center;
    justify-content: flex-end;
    padding-right: 24px;
}

.tray button {
    width: 31px;
}

.tray .clock {
    width: auto;
    margin: 0 10px 0 11px;
    font-size: 14px;
    line-height: 20px;
    text-align: right;
}

.alerts {
    width: 20px;
    height: 20px;
    border-radius: 10px;
    background-color: #62cbfc;
    color: #12292f;
    line-height: 20px;
    text-align: center;
}
```
